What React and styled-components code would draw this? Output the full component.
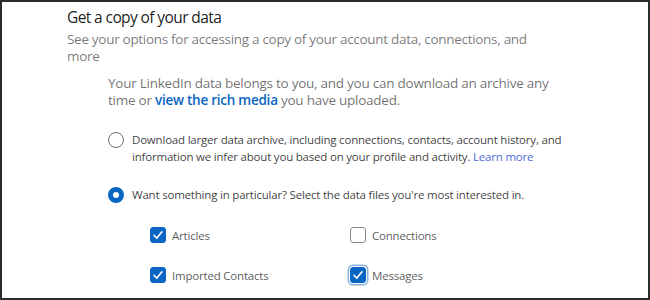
import styled, { createGlobalStyle } from "styled-components";

const GlobalStyle = createGlobalStyle`
  html, body {
    margin: 0;
    padding: 0;
    background: #ffffff;
  }
  * {
    box-sizing: border-box;
  }
`;

const Card = styled.section`
  width: 650px;
  height: 300px;
  border: 2px solid #2b2b2b;
  background: #ffffff;
  padding: 3px 0 0 65px;
  font-family: "Open Sans", "Noto Sans", sans-serif;
  overflow: hidden;
`;

const Title = styled.h2`
  margin: 0;
  font-size: 15.5px;
  letter-spacing: -0.6px;
  font-weight: 400;
  line-height: 24px;
  color: rgba(0, 0, 0, 0.9);
`;

const Subtitle = styled.p`
  margin: 2px 0 0;
  width: 470px;
  font-size: 13.5px;
  letter-spacing: -0.3px;
  line-height: 17px;
  color: rgba(0, 0, 0, 0.55);
`;

const Body = styled.div`
  padding: 10px 0 0 41px;
  display: flex;
  flex-direction: column;
`;

const Intro = styled.p`
  margin: 0;
  width: 462px;
  font-size: 13.5px;
  letter-spacing: -0.25px;
  line-height: 16.5px;
  color: rgba(0, 0, 0, 0.58);
`;

const Link = styled.a`
  color: ${(p) => (p.$soft ? "#4f6ad6" : "#0a66c2")};
  font-weight: ${(p) => (p.$soft ? 400 : 600)};
  text-decoration: none;
`;

const Options = styled.div`
  display: flex;
  flex-direction: column;
  gap: 21px;
  margin-top: 23px;
`;

const RadioRow = styled.label`
  display: flex;
  align-items: flex-start;
  gap: 8px;
  font-size: 11.5px;
  letter-spacing: -0.2px;
  line-height: 17px;
  color: rgba(0, 0, 0, 0.78);
`;

const RadioDot = styled.span`
  flex: none;
  width: 16px;
  height: 16px;
  margin-top: 0.5px;
  border-radius: 50%;
  border: ${(p) => (p.$checked ? "5px solid #0a66c2" : "1px solid #707070")};
  background: #ffffff;
`;

const RadioText = styled.span`
  width: 445px;
`;

const CheckGrid = styled.div`
  display: grid;
  grid-template-columns: 200px 200px;
  row-gap: 24px;
  margin: 24px 0 0 42px;
`;

const CheckRow = styled.label`
  display: flex;
  align-items: center;
  gap: 6px;
  height: 16px;
  font-size: 11.5px;
  letter-spacing: -0.2px;
  color: rgba(0, 0, 0, 0.68);
`;

const Box = styled.span`
  flex: none;
  width: 16px;
  height: 16px;
  border-radius: 3px;
  display: flex;
  align-items: center;
  justify-content: center;
  background: ${(p) => (p.$checked ? "#0a66c2" : "#ffffff")};
  border: 1px solid ${(p) => (p.$checked ? "#0a66c2" : "#8a8a8a")};
  box-shadow: ${(p) =>
    p.$focus ? "0 0 0 1px #ffffff, 0 0 0 2.5px #86b4de" : "none"};
`;

const Check = () => (
  <svg width="12" height="12" viewBox="0 0 12 12" fill="none">
    <path
      d="M2 6.3 L4.8 9.1 L10 2.8"
      stroke="#ffffff"
      strokeWidth="1.6"
      strokeLinecap="round"
      strokeLinejoin="round"
    />
  </svg>
);

const files = [
  { label: "Articles", checked: true },
  { label: "Connections", checked: false },
  { label: "Imported Contacts", checked: true },
  { label: "Messages", checked: true, focus: true },
];

export default function App() {
  return (
    <>
      <GlobalStyle />
      <Card>
        <Title>Get a copy of your data</Title>
        <Subtitle>
          See your options for accessing a copy of your account data,
          connections, and more
        </Subtitle>
        <Body>
          <Intro>
            Your LinkedIn data belongs to you, and you can download an archive
            any time or <Link href="#">view the rich media</Link> you have
            uploaded.
          </Intro>
          <Options>
            <RadioRow>
              <RadioDot />
              <RadioText>
                Download larger data archive, including connections, contacts,
                account history, and information we infer about you based on
                your profile and activity. <Link $soft href="#">Learn more</Link>
              </RadioText>
            </RadioRow>
            <RadioRow>
              <RadioDot $checked />
              <RadioText>
                Want something in particular? Select the data files you're most
                interested in.
              </RadioText>
            </RadioRow>
          </Options>
          <CheckGrid>
            {files.map((f) => (
              <CheckRow key={f.label}>
                <Box $checked={f.checked} $focus={f.focus}>
                  {f.checked && <Check />}
                </Box>
                {f.label}
              </CheckRow>
            ))}
          </CheckGrid>
        </Body>
      </Card>
    </>
  );
}
